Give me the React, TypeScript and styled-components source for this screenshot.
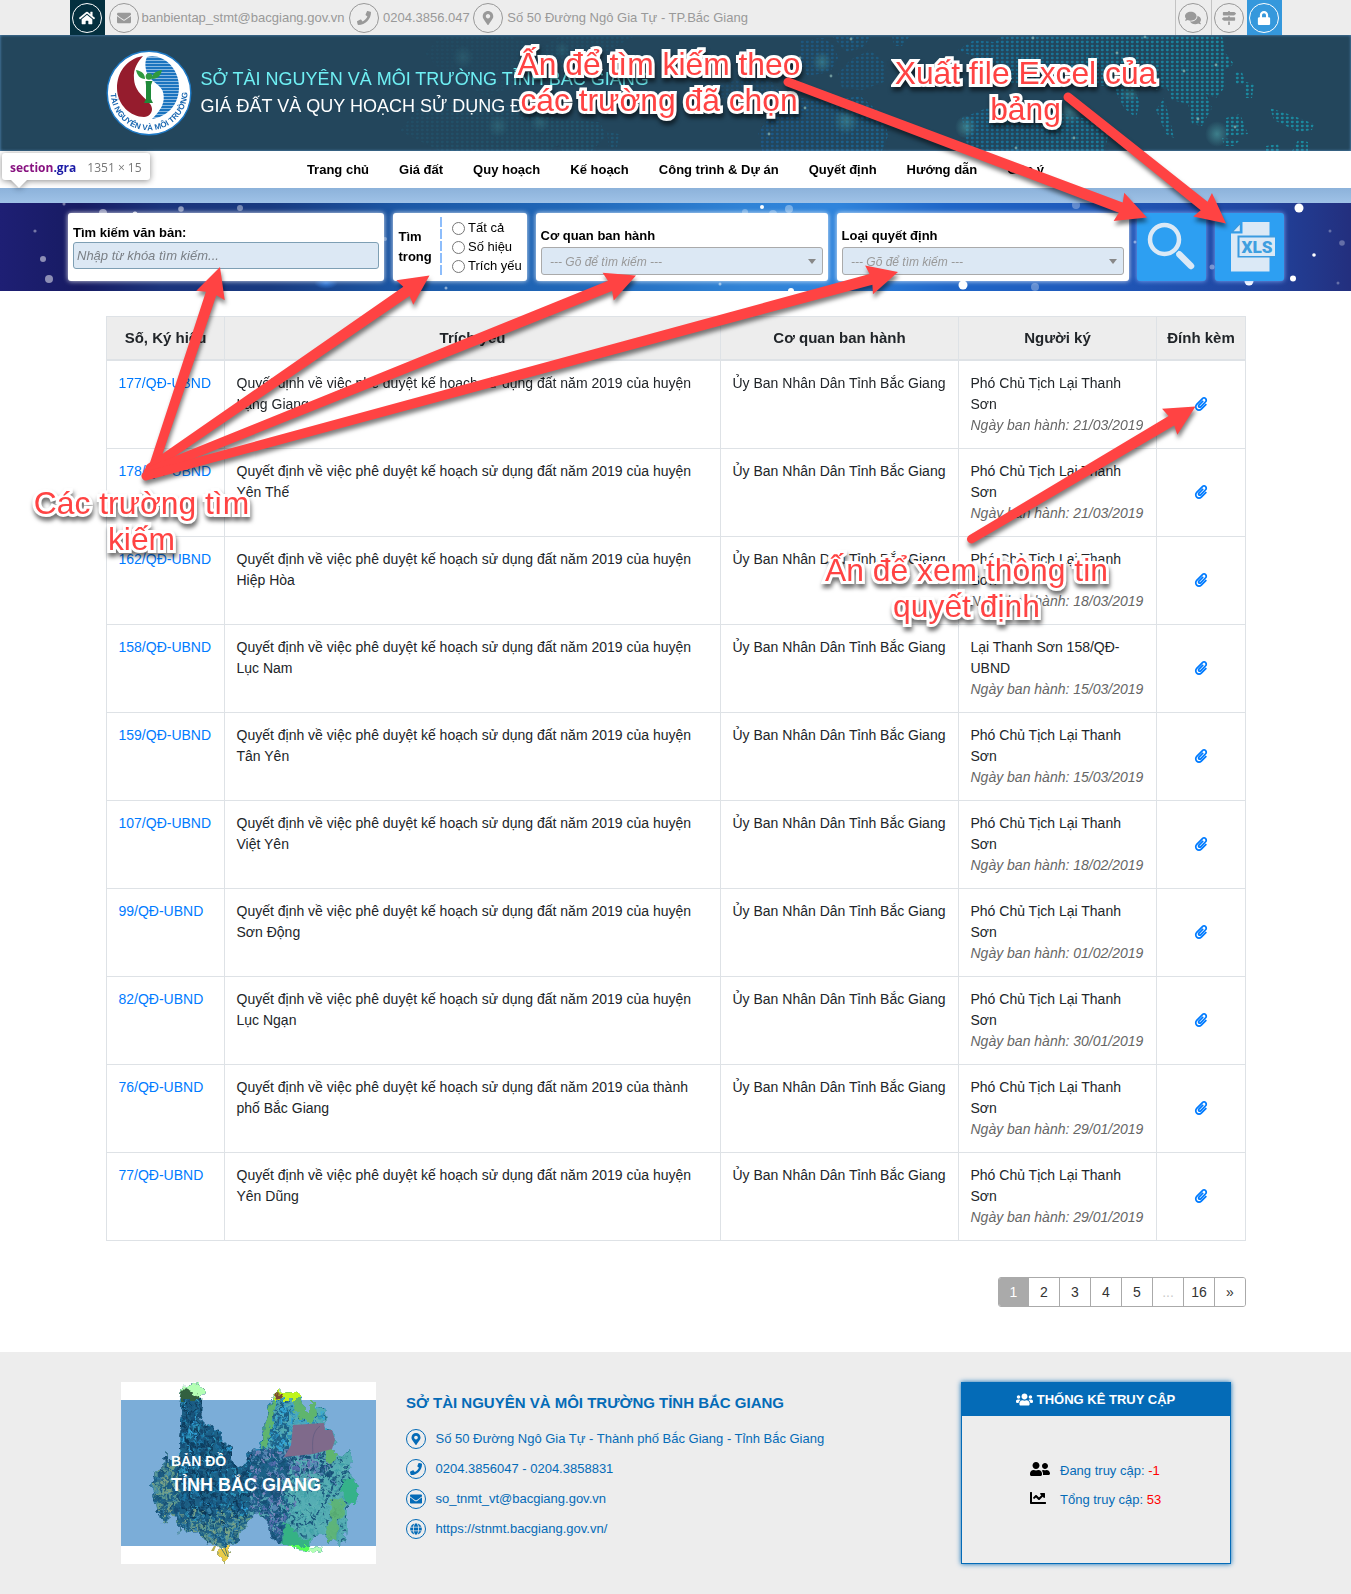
import React from 'react';
import styled, { createGlobalStyle, css } from 'styled-components';
import {
  FaHome, FaEnvelope, FaPhone, FaMapMarkerAlt, FaComments, FaMapSigns, FaLock,
  FaPaperclip, FaUsers, FaUserFriends, FaChartLine, FaGlobe,
} from 'react-icons/fa';

const Global = createGlobalStyle`
  *, *::before, *::after { box-sizing: border-box; }
  body {
    margin: 0;
    background: #fff;
    color: #212529;
    font: 14px/1.5 "Liberation Sans", Arial, sans-serif;
  }
  a { text-decoration: none; color: inherit; }
`;

const Page = styled.div`
  position: relative;
  width: 1351px;
  height: 1594px;
  overflow: hidden;
`;

/* ---------- top bar ---------- */
const TopBar = styled.div`
  display: flex;
  justify-content: space-between;
  height: 35px;
  padding: 0 69px 0 70px;
  background: #ededed;
  color: #999;
  font-size: 13px;
`;
const TopGroup = styled.div`
  display: flex;
  align-items: center;
`;
const Ring = styled.span<{ $size: number }>`
  display: inline-flex;
  flex: none;
  align-items: center;
  justify-content: center;
  width: ${p => p.$size}px;
  height: ${p => p.$size}px;
  border: 1px solid currentColor;
  border-radius: 50%;
`;
const TopTile = styled.a<{ $bg?: string; $line?: boolean; $w: number }>`
  display: flex;
  align-items: center;
  padding-left: 2px;
  width: ${p => p.$w}px;
  height: 35px;
  padding-top: 1px;
  background: ${p => p.$bg || 'transparent'};
  color: ${p => (p.$bg ? '#fff' : '#999')};
  border-left: ${p => (p.$line ? '1px solid #c4c4c4' : '0')};
`;
const Contact = styled.span<{ $before: number; $gap: number }>`
  display: flex;
  align-items: center;
  gap: ${p => p.$gap}px;
  margin-left: ${p => p.$before}px;
  padding-top: 1px;
  white-space: nowrap;
`;

/* ---------- banner ---------- */
const Banner = styled.header`
  display: grid;
  height: 116px;
  background: #23465c;
  > * { grid-area: 1 / 1; }
`;
const BannerInner = styled.div`
  display: flex;
  align-items: center;
  padding: 0 0 1px 105.5px;
  gap: 9px;
  box-shadow: inset 0 0 3px #5b93c6;
`;
const Titles = styled.div`
  font-size: 18px;
  line-height: 27px;
  color: #fff;
  white-space: nowrap;
`;
const TitleTop = styled.div`
  color: #6ff0f4;
`;

/* ---------- nav ---------- */
const Nav = styled.nav`
  display: flex;
  justify-content: center;
  align-items: center;
  gap: 30px;
  height: 37px;
  color: #000;
  font-size: 13px;
  font-weight: bold;
  a { white-space: nowrap; }
`;
const Strip = styled.section`
  height: 15px;
  background: linear-gradient(#8cb2da, #9fc2e7);
`;

/* ---------- search ---------- */
const SearchBand = styled.section`
  display: grid;
  height: 88px;
  isolation: isolate;
  > * { grid-area: 1 / 1; min-width: 0; }
`;
const SearchRow = styled.div`
  display: flex;
  padding: 10px 67px 10px 68px;
  gap: 8.5px;
  color: #000;
  font-size: 13px;
  z-index: 1;
`;
const card = css`
  height: 68px;
  border-radius: 3px;
  box-shadow: 0 0 5px rgba(255, 255, 255, 0.85);
`;
const Card = styled.div<{ $w: number; $top: number }>`
  ${card}
  display: flex;
  flex-direction: column;
  width: ${p => p.$w}px;
  padding: ${p => p.$top}px 5px 0;
  background: #fff;
`;
const ScopeCard = styled.div`
  ${card}
  display: flex;
  align-items: center;
  width: 134.5px;
  padding-left: 6px;
  background: #fff;
`;
const ScopeLabel = styled.b`
  width: 41px;
  line-height: 20px;
`;
const Dashes = styled.div`
  width: 2px;
  height: 60px;
  margin-right: 10.5px;
  background: repeating-linear-gradient(#8dbdfb 0 10px, transparent 10px 12px);
`;
const Options = styled.div`
  display: flex;
  flex-direction: column;
`;
const Option = styled.label`
  display: flex;
  align-items: center;
  gap: 3px;
  height: 19px;
  white-space: nowrap;
  input { width: 13px; height: 13px; margin: 0; }
`;
const Label = styled.b<{ $h: number }>`
  line-height: ${p => p.$h}px;
`;
const Input = styled.input`
  width: 100%;
  height: 27px;
  padding: 0 3px;
  border: 1px solid #7e9fb4;
  border-radius: 3px;
  background: #dce8f4;
  font: italic 13px "Liberation Sans", Arial, sans-serif;
  &::placeholder { color: #7a7f85; opacity: 1; }
`;
const Select = styled.div`
  display: flex;
  align-items: center;
  justify-content: space-between;
  height: 28px;
  padding: 1px 6px 0 8.5px;
  border: 1px solid #aaa;
  border-radius: 3px;
  background: #dce8f4;
  color: #999;
  font-style: italic;
  font-size: 12px;
`;
const Caret = styled.i`
  border: 4px solid transparent;
  border-top: 5px solid #888;
  border-bottom: 0;
`;
const Action = styled.button<{ $shift?: number }>`
  ${card}
  display: flex;
  align-items: center;
  justify-content: center;
  width: 69px;
  padding: 0 0 0 ${p => p.$shift || 0}px;
  border: 0;
  background: #2d9ff2;
  box-shadow: 0 0 5px rgba(140, 180, 255, 0.9);
`;

/* ---------- table ---------- */
const Main = styled.main`
  width: 1140px;
  height: 1061px;
  margin: 0 0 0 106px;
  padding-top: 25px;
`;
const Table = styled.table`
  width: 1139px;
  border-collapse: collapse;
  table-layout: fixed;
`;
const Th = styled.th`
  height: 43px;
  padding: 0;
  border: 1px solid #dee2e6;
  border-bottom-width: 2px;
  background: #ededed;
  font-size: 15px;
  line-height: 22px;
`;
const Td = styled.td<{ $center?: boolean }>`
  height: 88px;
  padding: 12px 11px 12px 11.5px;
  border: 1px solid #dee2e6;
  vertical-align: ${p => (p.$center ? 'middle' : 'top')};
  text-align: ${p => (p.$center ? 'center' : 'left')};
  line-height: 21px;
`;
const DocLink = styled.a`
  color: #007bff;
  white-space: nowrap;
`;
const Clip = styled.a`
  display: inline-flex;
  margin-top: -2px;
  color: #007bff;
  vertical-align: middle;
`;
const Signed = styled.em`
  display: block;
  color: #666;
  white-space: nowrap;
`;
const Pager = styled.div`
  display: flex;
  width: 248px;
  height: 30px;
  margin: 36px 0 0 auto;
  border: 1px solid #aaa;
  border-radius: 3px;
  overflow: hidden;
`;
const PageNo = styled.a<{ $active?: boolean; $muted?: boolean }>`
  flex: ${p => (p.$active ? '0 0 29px' : '1')};
  line-height: 28px;
  text-align: center;
  color: ${p => (p.$active ? '#fff' : p.$muted ? '#ccc' : '#333')};
  background: ${p => (p.$active ? '#aaa' : '#fff')};
  & + & { border-left: 1px solid #aaa; }
`;

/* ---------- footer ---------- */
const Footer = styled.footer`
  display: flex;
  height: 242px;
  padding: 30px 120px 0 121px;
  background: #ededed;
  color: #046bb7;
  font-size: 13px;
  isolation: isolate;
`;
const MapCard = styled.div`
  display: grid;
  width: 255px;
  height: 182px;
  background: #fff;
  > * { grid-area: 1 / 1; }
`;
const MapCaption = styled.div`
  padding: 68px 0 0 50px;
  z-index: 1;
  color: #fff;
  font-weight: bold;
  font-size: 18px;
  line-height: 25px;
`;
const MapSmall = styled.div`
  font-size: 14px;
  line-height: 22px;
  padding-bottom: 1px;
`;
const Office = styled.div`
  flex: 1;
  margin-left: 30px;
`;
const OfficeName = styled.div`
  margin-bottom: 10px;
  padding-top: 10px;
  font-size: 15px;
  line-height: 22px;
  font-weight: bold;
`;
const OfficeLine = styled.div`
  display: flex;
  align-items: center;
  gap: 9.5px;
  height: 30px;
  line-height: 20px;
`;
const Stats = styled.div`
  width: 270px;
  height: 182px;
  border: 1px solid #046bb7;
  box-shadow: 0 0 5px #046bb7;
`;
const StatsHead = styled.div`
  display: flex;
  align-items: center;
  justify-content: center;
  gap: 4px;
  height: 33px;
  padding-right: 1px;
  background: #046bb7;
  color: #fff;
  font-weight: bold;
`;
const StatsBody = styled.div`
  padding: 40px 0 0 68px;
`;
const Stat = styled.div`
  display: grid;
  grid-template-columns: 30px auto;
  align-items: center;
  height: 29px;
  svg { color: #000; margin-top: -3px; }
  b { font-weight: normal; color: #f00; }
`;

/* ---------- overlays ---------- */
const Inspect = styled.div`
  position: absolute;
  left: 2px;
  top: 153px;
  display: flex;
  align-items: center;
  gap: 11px;
  width: 148px;
  height: 27px;
  padding: 2px 0 0 8px;
  border-radius: 3px;
  background: #fff;
  filter: drop-shadow(0 1px 3px rgba(0, 0, 0, 0.45));
  font: 12px "Open Sans", "Noto Sans", sans-serif;
  color: #777;
  white-space: nowrap;
  b { color: #881280; font-weight: 700; }
  b span { color: #1a1aa6; }
  &::after {
    content: '';
    position: absolute;
    left: 9px;
    top: 27px;
    border: 8px solid transparent;
    border-top-color: #fff;
    border-bottom: 0;
  }
`;
const Arrows = styled.svg`
  position: absolute;
  left: 0;
  top: 0;
  z-index: 3;
  filter: drop-shadow(1px 4px 2px rgba(0, 0, 0, 0.5));
  pointer-events: none;
`;
const Note = styled.div<{ $x: number; $y: number }>`
  position: absolute;
  left: ${p => p.$x}px;
  top: ${p => p.$y}px;
  z-index: 2;
  transform: translateX(-50%);
  color: #ff4343;
  font-size: 31.8px;
  line-height: 36px;
  text-align: center;
  white-space: pre;
  -webkit-text-stroke: 6px #fff;
  paint-order: stroke fill;
  stroke-linejoin: round;
  filter: drop-shadow(1px 4px 2px rgba(0, 0, 0, 0.55));
`;

const rows = [
  ['177/QĐ-UBND', 'huyện Lạng Giang', 'Phó Chủ Tịch Lại Thanh Sơn', '21/03/2019'],
  ['178/QĐ-UBND', 'huyện Yên Thế', 'Phó Chủ Tịch Lại Thanh Sơn', '21/03/2019'],
  ['162/QĐ-UBND', 'huyện Hiệp Hòa', 'Phó Chủ Tịch Lại Thanh Sơn', '18/03/2019'],
  ['158/QĐ-UBND', 'huyện Lục Nam', 'Lại Thanh Sơn 158/QĐ-UBND', '15/03/2019'],
  ['159/QĐ-UBND', 'huyện Tân Yên', 'Phó Chủ Tịch Lại Thanh Sơn', '15/03/2019'],
  ['107/QĐ-UBND', 'huyện Việt Yên', 'Phó Chủ Tịch Lại Thanh Sơn', '18/02/2019'],
  ['99/QĐ-UBND', 'huyện Sơn Động', 'Phó Chủ Tịch Lại Thanh Sơn', '01/02/2019'],
  ['82/QĐ-UBND', 'huyện Lục Ngạn', 'Phó Chủ Tịch Lại Thanh Sơn', '30/01/2019'],
  ['76/QĐ-UBND', 'thành phố Bắc Giang', 'Phó Chủ Tịch Lại Thanh Sơn', '29/01/2019'],
  ['77/QĐ-UBND', 'huyện Yên Dũng', 'Phó Chủ Tịch Lại Thanh Sơn', '29/01/2019'],
];

const arrows: [number, number, number, number][] = [
  [153, 468, 220, 267],
  [150, 468, 429.5, 275.5],
  [148, 472, 636, 275.5],
  [146, 476, 898, 272],
  [788, 82, 1147, 217.5],
  [1068, 97, 1226, 223.5],
  [971.5, 539, 1195.5, 406.5],
];

function Arrow({ a }: { a: [number, number, number, number] }) {
  const [x1, y1, x2, y2] = a;
  const len = Math.hypot(x2 - x1, y2 - y1);
  const deg = (Math.atan2(y2 - y1, x2 - x1) * 180) / Math.PI;
  const d = `M0 -4.5 L${len - 28} -5.5 L${len - 30} -15 L${len} 0 L${len - 30} 15 L${len - 28} 5.5 L0 4.5 A4.5 4.5 0 0 1 0 -4.5Z`;
  return <path d={d} transform={`translate(${x1} ${y1}) rotate(${deg})`} fill="#ff4343" />;
}

function WorldDots() {
  const glows = [[463, 57, 9, 0.3], [498, 126, 9, 0.4], [540, 122, 8, 0.4], [562, 50, 6, 0.3], [822, 62, 8, 0.7], [846, 121, 11, 0.7], [966, 127, 9, 0.9], [1070, 112, 10, 0.7], [1130, 92, 8, 0.6], [1217, 134, 10, 1]];
  const specks = [[851, 39], [831, 76], [805, 108], [769, 134], [1033, 38], [1117, 53], [1145, 37], [1184, 71], [1198, 119], [1235, 127], [1074, 138], [1016, 148], [800, 58], [1216, 65]];
  return (
    <svg width="1351" height="116" viewBox="0 35 1351 116">
      <defs>
        <pattern id="dots" width="5" height="4" patternUnits="userSpaceOnUse">
          <rect x="0.8" y="0.7" width="3" height="2.5" rx="1.1" fill="#fff" />
        </pattern>
        <mask id="dotMask"><rect y="35" width="1351" height="116" fill="url(#dots)" /></mask>
        <radialGradient id="glow">
          <stop offset="0" stopColor="#4fa5ab" stopOpacity="0.6" />
          <stop offset="1" stopColor="#4fa5ab" stopOpacity="0" />
        </radialGradient>
        <linearGradient id="land" x1="350" x2="1250" y1="0" y2="0" gradientUnits="userSpaceOnUse">
          <stop offset="0" stopColor="#234b63" />
          <stop offset="0.25" stopColor="#21566e" />
          <stop offset="0.45" stopColor="#1d5785" />
          <stop offset="0.7" stopColor="#1a6d94" />
          <stop offset="1" stopColor="#1b8aa0" />
        </linearGradient>
      </defs>
      <g mask="url(#dotMask)" fill="url(#land)">
        <path d="M440 36h70l30 12 20-12h75l-40 22-50 20-60 18-40-22-20-20z" opacity="0.5" />
        <path d="M420 105l60-6 60 12 40 18-30 22h-110l-40-20zM545 118l55 4 6 14-14 15h-30z" />
        <path d="M607 132l12 2-2 14h-8z" />
        <path d="M800 40l24-2 10 8 4 12-8 14-22 4-10-14zM832 36h40l-10 12-16 4zM892 36h18l-8 10h-8z" opacity="0.8" />
        <path d="M850 60l20-10 16 14-2 18-22 8-20-2-4-14z" opacity="0.7" />
        <path d="M720 84l28-6 24 4 10 10-24 8-40-2z" opacity="0.5" />
        <path d="M758 132l14-18 30-16 24 4 34-6 24 20 4 20-6 15H762z" />
        <path d="M958 50l16-10 20 2 8-6h220l4 18 8 10-10 6 2 16-10 12-10-4 6 14-10 18-10-2-4-20-16-4-6-14-10 4-6-10-20 2 10 20-4 16-12-10-10-20-30-6-20 4-20-8-28 6-16 2-8-10 10-10-16-4z" />
        <path d="M1164 98l6 22 4 18-8-4-10-24z" />
        <path d="M962 118l30-12 54 4 54 12 10 8-6 21H968z" />
        <path d="M1234 72h8l4 12h-10zM1246 82l8 2-2 14h-8zM1226 118l14-4 8 20-22 2zM1270 108l24 8 20 8-2 6-14 2-24-12zM1298 140l10 2 0 9h-16zM1266 146l12-2 2 7h-14zM1222 138l18 2-6 6h-10z" />
      </g>
      {glows.map(([x, y, r, o]) => <ellipse key={x} cx={x} cy={y} rx={r + 2} ry={r + 3} fill="url(#glow)" opacity={o} />)}
      {specks.map(([x, y]) => <circle key={x} cx={x} cy={y} r="1.4" fill="#8fb9b5" opacity="0.7" />)}
    </svg>
  );
}

function Emblem() {
  return (
    <svg width="86" height="86" viewBox="0 0 86 86">
      <defs>
        <path id="rim" d="M4.600 42A38.400 38.400 0 0 0 81.400 42" />
        <pattern id="waves" width="10" height="3" patternUnits="userSpaceOnUse">
          <rect width="10" height="3" fill="#1b74bf" />
          <rect width="10" height="0.8" y="1.2" fill="#a5cbea" />
        </pattern>
      </defs>
      <circle cx="43" cy="43" r="41.800" fill="#fff" stroke="#1f7ac6" strokeWidth="1.400" />
      <path d="M37 6C20 9 11 23 11 38c0 17 14 29 27 29 5 0 8-4 8-8 0-9-17-13-18-30C27 18 32 12 37 6z" fill="#951c2d" />
      <path d="M41 7c16-4 32 11 32 30S60 67 46 69c8-8 14-16 11-27C55 34 42 31 40 20c-1-5-1-9 1-13z" fill="url(#waves)" />
      <path d="M39.500 31h7l-1.500 4v14l2 4h-9l2-4V35z" fill="#1f8a3a" />
      <circle cx="43" cy="26.500" r="3.300" fill="#2f9a40" />
      <path d="M30 20c6 1 9 4 9 9-5 0-8-4-9-9zM56 20c-7 1-10 4-10 9 6 0 9-4 10-9z" fill="#2f9a40" />
      <text fontSize="8" fontWeight="bold" fill="#1a67b0">
        <textPath href="#rim" startOffset="1.500">TÀI NGUYÊN VÀ MÔI TRƯỜNG</textPath>
      </text>
    </svg>
  );
}

const bokeh: [number, number, number, number][] = [
  [103, 213, 4, 0.5], [35, 231, 1.6, 0.4], [43, 259, 3, 0.5], [49, 279, 4, 0.5], [64, 204, 1.5, 0.4],
  [181, 209, 2.8, 0.5], [240, 208, 3, 0.4], [135, 214, 2.5, 0.8], [385, 239, 2, 0.35], [446, 288, 1.5, 0.5],
  [762, 207, 2, 1], [745, 212, 3, 0.3], [773, 214, 4, 0.3], [789, 209, 4, 0.35], [720, 284, 1.5, 0.5], [791, 291, 3, 1],
  [963, 285, 4.5, 1], [1035, 287, 4, 0.3], [1076, 205, 4, 0.3], [1135, 242, 1.5, 0.5], [1249, 281, 4.5, 1],
  [1299, 208, 4.5, 1], [1330, 231, 1.5, 0.3], [1342, 243, 2.8, 0.3], [1314, 255, 1.8, 1], [1293, 278.5, 3, 1], [1338, 283, 1.5, 0.3],
  [1212, 267, 2.5, 0.4],
];

function NightBackdrop() {
  return (
    <svg width="1351" height="88" viewBox="0 203 1351 88">
      <defs>
        <linearGradient id="sky">
          <stop offset="0" stopColor="#1e1f74" />
          <stop offset="0.06" stopColor="#171b62" />
          <stop offset="0.12" stopColor="#1b347c" />
          <stop offset="0.2" stopColor="#183a80" />
          <stop offset="0.3" stopColor="#1b58a6" />
          <stop offset="0.42" stopColor="#2067b8" />
          <stop offset="0.55" stopColor="#3083d6" />
          <stop offset="0.62" stopColor="#2f84dc" />
          <stop offset="0.7" stopColor="#1f66c8" />
          <stop offset="0.82" stopColor="#1f57b8" />
          <stop offset="0.93" stopColor="#21459f" />
          <stop offset="1" stopColor="#232f7e" />
        </linearGradient>
        <radialGradient id="spot">
          <stop offset="0" stopColor="#3c8af0" stopOpacity="0.8" />
          <stop offset="1" stopColor="#3c8af0" stopOpacity="0" />
        </radialGradient>
      </defs>
      <rect y="203" width="1351" height="88" fill="url(#sky)" />
      <ellipse cx="326" cy="283" rx="12" ry="6" fill="url(#spot)" />
      {bokeh.map(([x, y, r, o]) => <circle key={`${x}-${y}`} cx={x} cy={y} r={r} fill="#fff" opacity={o} />)}
    </svg>
  );
}

function MagnifierIcon() {
  return (
    <svg width="50" height="50" viewBox="0 0 50 50" fill="none" stroke="#dbe9f6">
      <circle cx="17.500" cy="17.500" r="14.500" strokeWidth="4.500" />
      <path d="M30.500 30l2.500 2.500" strokeWidth="4" />
      <path d="M32.500 32.500l11.500 11.500" strokeWidth="6.500" strokeLinecap="round" />
    </svg>
  );
}

function XlsIcon() {
  return (
    <svg width="46" height="50" viewBox="0 0 46 50">
      <path d="M13.500 0H40.500V49.500H2V11.500H13.500z" fill="#dbe9f6" />
      <path d="M11.500 1v9H3z" fill="#dbe9f6" stroke="#3b9be0" strokeWidth="1.400" />
      <rect x="8.500" y="13.500" width="37.500" height="22" fill="#3b9be0" />
      <rect x="10.500" y="15.500" width="35.500" height="18.500" fill="#dbe9f6" />
      <text x="28" y="30.500" textAnchor="middle" textLength="31" lengthAdjust="spacingAndGlyphs" fontFamily="Roboto, sans-serif" fontSize="17" fontWeight="900" fill="#3f9fe0">XLS</text>
    </svg>
  );
}

const provinceOutline =
  'M62 5L76 1 83 8 81 18 80 38 94 48 102 50 101 60 110 65 110 76 116 84 127 81 126 70 139 66 141 56 144 40 151 15 157 10 176 9 179 16 184 28 189 31 189 20 193 20 195 25 203 25 206 38 203 41 204 48 211 48 214 58 211 66 216 75 229 69 231 78 228 90 234 100 238 111 234 121 227 121 227 135 224 161 219 164 216 158 209 160 202 151 194 153 189 165 201 166 200 171 179 168 162 163 149 155 147 141 139 131 132 133 126 141 119 151 114 164 107 163 109 175 104 180 98 175 99 165 93 162 84 161 79 150 69 151 59 145 58 152 56 135 49 133 47 144 39 138 34 118 31 105 34 91 42 88 45 68 47 81 59 73 60 38 58 21z';

function ProvinceMap() {
  let seed = 7;
  const rand = () => {
    seed = (seed * 16807) % 2147483647;
    return seed / 2147483647;
  };
  const dark = ['#174f76', '#14507a', '#14486c', '#1d5f86', '#2f9ac0', '#1d78a8', '#123f60', '#0f3858'];
  const mid = ['#174f76', '#5a6fb0', '#5aa6b4', '#2a5f90', '#5a8ab6', '#7f86bd', '#1c5c80', '#174f76'];
  const north = ['#35a8d8', '#4ba6c0', '#56aeb4', '#2a8ab8', '#1f5f86'];
  const light = ['#56aeb4', '#4ca6ac', '#56aeb4', '#5fb5b6', '#56aeb4', '#1f5a80', '#3f9fa8'];
  const olive = ['#68a08c', '#7ea586', '#1c5c80', '#5b9a98', '#174f76', '#3d8ab0'];
  const pick = (x: number, y: number) => {
    if (x < 57 || (y > 122 + rand() * 20 && x < 128)) return olive;
    if (x < 128) return dark;
    if (y < 66) return north;
    if (x < 155 + rand() * 20 || (y < 88 + rand() * 14 && x < 212)) return mid;
    return light;
  };
  const specks = Array.from({ length: 7500 }, () => {
    const x = 24 + rand() * 220;
    const y = rand() * 182;
    const set = pick(x, y);
    return { x, y, w: 0.8 + rand() * 2.8, h: 0.8 + rand() * 2.6, c: set[Math.floor(rand() * set.length)] };
  });
  const streaks = Array.from({ length: 90 }, () => ({
    x: 60 + rand() * 65, y: 22 + rand() * 105, dx: rand() * 12 - 4, dy: 3 + rand() * 8, c: rand() > 0.7 ? '#35a8e0' : '#0f3858',
  }));
  return (
    <svg width="255" height="182" viewBox="0 0 255 182">
      <defs>
        <clipPath id="province"><path d={provinceOutline} /></clipPath>
        <filter id="ragged" x="0" y="0" width="255" height="182" filterUnits="userSpaceOnUse">
          <feTurbulence type="fractalNoise" baseFrequency="0.16" numOctaves="2" seed="4" result="n" />
          <feDisplacementMap in="SourceGraphic" in2="n" scale="9" xChannelSelector="R" yChannelSelector="G" />
        </filter>
      </defs>
      <rect y="18" width="255" height="146" fill="#7badd8" />
      <g filter="url(#ragged)">
        <g clipPath="url(#province)">
          <rect width="255" height="182" fill="#1f6288" />
          <rect x="168" width="90" height="182" fill="#56aeb4" />
          {specks.map((s, i) => (
            <path key={i} d={`M${s.x.toFixed(1)} ${s.y.toFixed(1)}l${s.w.toFixed(1)} ${(s.h / 3).toFixed(1)}l-${(s.w / 2).toFixed(1)} ${s.h.toFixed(1)}z`} fill={s.c} stroke={s.c} strokeWidth="0.7" />
          ))}
          {streaks.map((s, i) => (
            <path key={i} d={`M${s.x.toFixed(1)} ${s.y.toFixed(1)}l${s.dx.toFixed(1)} ${s.dy.toFixed(1)}`} stroke={s.c} strokeWidth="0.9" />
          ))}
          <path d="M141 66l3-26 7-22 4 2-5 22-4 22z" fill="#5fb56e" />
          <path d="M172 18h8l5 10 8 4-2 8-10-2-8-10zM188 19h6l2 14-8 2z" fill="#5fb56e" />
          <path d="M209 116l12 2 4 10-8 10-2 20-8 2-3-10 6-12z" fill="#5fb56e" opacity="0.85" />
          <path d="M204 68l8-2 4 8-6 8-6-4z" fill="#5fb56e" />
          <path d="M223 98l12-2 4 14-4 12-10-2-5-10z" fill="#35b28a" />
          <path d="M163 138l10 8 4 10 12 2 0 8-16 2-12-6z" fill="#35b284" />
          <path d="M134 134l6-4 4 8-6 4z" fill="#35b284" />
          <path d="M205 90l-8 14-12 8M214 96l-10 26-14 18-16 4M226 84l-6 22-10 14" fill="none" stroke="#1f5a80" strokeWidth="2.500" strokeDasharray="3 1.500" />
          <path d="M60 16V2l16-4 10 10-2 10z" fill="#b4ffb4" />
          <path d="M60 18V10l4-4 6 3 2 4 8 2v3z" fill="#33603f" />
          <path d="M150 18l1-10h28v10z" fill="#c0f51c" />
          <path d="M153 16l2-5 6 1-2 6z" fill="#7a4a30" />
          <path d="M96 164h14v18H96z" fill="#eacb4a" />
          <path d="M160 164h30l-1 6z" fill="#54ff54" />
          <path d="M188 164h14v8h-14z" fill="#b4ffb4" />
        </g>
      </g>
      <path d="M172 43L203 41 204 48 211 48 214 58 211 67 192 72 163 75 170 63z" fill="#7f6a8b" />
      <path d="M199 44c-8 6-8 16-7 28" fill="none" stroke="#5f5a80" strokeWidth="0.7" />
      <path d="M90 169l3-5h2l-2 5z" fill="#b7ad55" />
      <path d="M100 166l5 8M104 166l3 9" stroke="#5b7d60" />
    </svg>
  );
}

export default function App() {
  return (
    <Page>
      <Global />
      <TopBar>
        <TopGroup>
          <TopTile $w={35} $bg="#04303f"><Ring $size={30}><FaHome size={16} /></Ring></TopTile>
          <Contact $before={4} $gap={2.5}><Ring $size={30}><FaEnvelope size={14} /></Ring>banbientap_stmt@bacgiang.gov.vn</Contact>
          <Contact $before={4.5} $gap={4}><Ring $size={30}><FaPhone size={14} /></Ring>0204.3856.047</Contact>
          <Contact $before={3} $gap={4.5}><Ring $size={30}><FaMapMarkerAlt size={14} /></Ring>Số 50 Đường Ngô Gia Tự - TP.Bắc Giang</Contact>
        </TopGroup>
        <TopGroup>
          <TopTile $w={36} $line><Ring $size={30}><FaComments size={16} /></Ring></TopTile>
          <TopTile $w={36} $line><Ring $size={30}><FaMapSigns size={14} /></Ring></TopTile>
          <TopTile $w={35} $bg="#3598dc"><Ring $size={30}><FaLock size={14} /></Ring></TopTile>
        </TopGroup>
      </TopBar>

      <Banner>
        <WorldDots />
        <BannerInner>
          <Emblem />
          <Titles>
            <TitleTop>SỞ TÀI NGUYÊN VÀ MÔI TRƯỜNG TỈNH BẮC GIANG</TitleTop>
            GIÁ ĐẤT VÀ QUY HOẠCH SỬ DỤNG ĐẤT
          </Titles>
        </BannerInner>
      </Banner>

      <Nav>
        {['Trang chủ', 'Giá đất', 'Quy hoạch', 'Kế hoạch', 'Công trình & Dự án', 'Quyết định', 'Hướng dẫn', 'Góp ý'].map(t => <a key={t}>{t}</a>)}
      </Nav>
      <Strip />

      <SearchBand>
        <NightBackdrop />
        <SearchRow>
          <Card $w={316} $top={10}>
            <Label $h={19}>Tìm kiếm văn bản:</Label>
            <Input placeholder="Nhập từ khóa tìm kiếm..." />
          </Card>
          <ScopeCard>
            <ScopeLabel>Tìm trong</ScopeLabel>
            <Dashes />
            <Options>
              {['Tất cả', 'Số hiệu', 'Trích yếu'].map(t => <Option key={t}><input type="radio" name="scope" />{t}</Option>)}
            </Options>
          </ScopeCard>
          <Card $w={292.5} $top={12}>
            <Label $h={22}>Cơ quan ban hành</Label>
            <Select>--- Gõ để tìm kiếm ---<Caret /></Select>
          </Card>
          <Card $w={292} $top={12}>
            <Label $h={22}>Loại quyết định</Label>
            <Select>--- Gõ để tìm kiếm ---<Caret /></Select>
          </Card>
          <Action><MagnifierIcon /></Action>
          <Action $shift={5}><XlsIcon /></Action>
        </SearchRow>
      </SearchBand>

      <Main>
        <Table>
          <colgroup>
            <col width="118" /><col width="496" /><col width="238" /><col width="198" /><col width="89" />
          </colgroup>
          <thead>
            <tr>{['Số, Ký hiệu', 'Trích yếu', 'Cơ quan ban hành', 'Người ký', 'Đính kèm'].map(h => <Th key={h}>{h}</Th>)}</tr>
          </thead>
          <tbody>
            {rows.map(([no, place, signer, date]) => (
              <tr key={no}>
                <Td><DocLink>{no}</DocLink></Td>
                <Td>Quyết định về việc phê duyệt kế hoạch sử dụng đất năm 2019 của {place}</Td>
                <Td>Ủy Ban Nhân Dân Tỉnh Bắc Giang</Td>
                <Td>{signer}<Signed>Ngày ban hành: {date}</Signed></Td>
                <Td $center><Clip><FaPaperclip size={14} /></Clip></Td>
              </tr>
            ))}
          </tbody>
        </Table>
        <Pager>
          {['1', '2', '3', '4', '5', '...', '16', '»'].map(p => (
            <PageNo key={p} $active={p === '1'} $muted={p === '...'}>{p}</PageNo>
          ))}
        </Pager>
      </Main>

      <Footer>
        <MapCard>
          <ProvinceMap />
          <MapCaption><MapSmall>BẢN ĐỒ</MapSmall>TỈNH BẮC GIANG</MapCaption>
        </MapCard>
        <Office>
          <OfficeName>SỞ TÀI NGUYÊN VÀ MÔI TRƯỜNG TỈNH BẮC GIANG</OfficeName>
          <OfficeLine><Ring $size={20}><FaMapMarkerAlt size={12} /></Ring>Số 50 Đường Ngô Gia Tự - Thành phố Bắc Giang - Tỉnh Bắc Giang</OfficeLine>
          <OfficeLine><Ring $size={20}><FaPhone size={12} /></Ring>0204.3856047 - 0204.3858831</OfficeLine>
          <OfficeLine><Ring $size={20}><FaEnvelope size={12} /></Ring>so_tnmt_vt@bacgiang.gov.vn</OfficeLine>
          <OfficeLine><Ring $size={20}><FaGlobe size={12} /></Ring>https://stnmt.bacgiang.gov.vn/</OfficeLine>
        </Office>
        <Stats>
          <StatsHead><FaUsers size={17} />THỐNG KÊ TRUY CẬP</StatsHead>
          <StatsBody>
            <Stat><FaUserFriends size={20} /><span>Đang truy cập: <b>-1</b></span></Stat>
            <Stat><FaChartLine size={16} /><span>Tổng truy cập: <b>53</b></span></Stat>
          </StatsBody>
        </Stats>
      </Footer>

      <Inspect><b>section<span>.gra</span></b>1351 × 15</Inspect>

      <Note $x={659} $y={46}>{'Ấn để tìm kiếm theo\ncác trường đã chọn'}</Note>
      <Note $x={1025.5} $y={55}>{'Xuất file Excel của\nbảng'}</Note>
      <Note $x={141.5} $y={484.5}>{'Các trường tìm\nkiếm'}</Note>
      <Note $x={966.5} $y={551.5}>{'Ấn để xem thông tin\nquyết định'}</Note>
      <Arrows width="1351" height="640">
        {arrows.map(a => <Arrow key={a.join()} a={a} />)}
      </Arrows>
    </Page>
  );
}
